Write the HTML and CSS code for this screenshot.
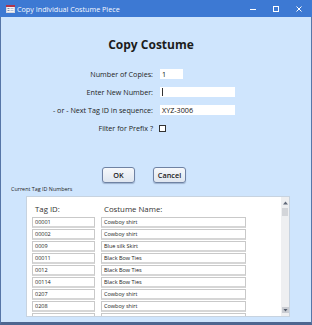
FILE: index.html
```html
<!DOCTYPE html>
<html>
<head>
<meta charset="utf-8">
<link rel="stylesheet" href="styles.css">
</head>
<body>
<div class="window">
  <div class="titlebar">
    <svg class="app-icon" width="9" height="8" viewBox="0 0 9 8">
      <rect x="0.5" y="0.5" width="8" height="7" fill="#f4f4f4" stroke="#d8d8e0"/>
      <rect x="0" y="0" width="9" height="2" fill="#b0344a"/>
      <rect x="1.5" y="3" width="2" height="1" fill="#7a8bb0"/>
      <rect x="1.5" y="5" width="2" height="1" fill="#7a8bb0"/>
      <rect x="4.5" y="3" width="3" height="1" fill="#b5bfd4"/>
      <rect x="4.5" y="5" width="3" height="1" fill="#b5bfd4"/>
    </svg>
    <span class="title">Copy Individual Costume Piece</span>
    <div class="controls">
      <svg class="ctl" width="10" height="10" viewBox="0 0 10 10"><line x1="2" y1="5.5" x2="8" y2="5.5" stroke="#fff" stroke-width="1"/></svg>
      <svg class="ctl" width="10" height="10" viewBox="0 0 10 10"><rect x="2.5" y="2.5" width="5" height="5" fill="none" stroke="#fff" stroke-width="1"/></svg>
      <svg class="ctl" width="10" height="10" viewBox="0 0 10 10"><path d="M2.5 2.5 L7.5 7.5 M7.5 2.5 L2.5 7.5" stroke="#fff" stroke-width="1"/></svg>
    </div>
  </div>
  <div class="body">
    <h1 class="heading">Copy Costume</h1>
    <div class="form">
      <span class="label">Number of Copies:</span>
      <div class="field short">1</div>
      <span class="label">Enter New Number:</span>
      <div class="field long"><span class="caret"></span></div>
      <span class="label">- or - Next Tag ID in sequence:</span>
      <div class="field long">XYZ-3006</div>
      <span class="label">Filter for Prefix ?</span>
      <div class="check-cell"><span class="checkbox"></span></div>
    </div>
    <div class="buttons">
      <button class="btn ok">OK</button>
      <button class="btn">Cancel</button>
    </div>
    <div class="sub-label">Current Tag ID Numbers</div>
    <div class="subform">
      <div class="list">
        <div class="list-head"><span class="col1">Tag ID:</span><span class="col2">Costume Name:</span></div>
        <div class="row"><div class="cell col1">00001</div><div class="cell col2">Cowboy shirt</div></div>
        <div class="row"><div class="cell col1">00002</div><div class="cell col2">Cowboy shirt</div></div>
        <div class="row"><div class="cell col1">0009</div><div class="cell col2">Blue silk Skirt</div></div>
        <div class="row"><div class="cell col1">00011</div><div class="cell col2">Black Bow Ties</div></div>
        <div class="row"><div class="cell col1">0012</div><div class="cell col2">Black Bow Ties</div></div>
        <div class="row"><div class="cell col1">00114</div><div class="cell col2">Black Bow Ties</div></div>
        <div class="row"><div class="cell col1">0207</div><div class="cell col2">Cowboy shirt</div></div>
        <div class="row"><div class="cell col1">0208</div><div class="cell col2">Cowboy shirt</div></div>
        <div class="row"><div class="cell col1">0209</div><div class="cell col2">Cowboy shirt</div></div>
      </div>
      <div class="scrollbar">
        <svg class="arrow" width="7" height="6" viewBox="0 0 7 6"><path d="M1 4.5 L3.5 1.5 L6 4.5 Z" fill="#606878"/></svg>
        <div class="thumb"></div>
        <div class="track"></div>
        <svg class="arrow down" width="7" height="6" viewBox="0 0 7 6"><rect x="0" y="0" width="7" height="6" fill="#c9ccd2"/><path d="M1.5 2 L5.5 2 L3.5 4.5 Z" fill="#505868"/></svg>
      </div>
    </div>
  </div>
</div>
</body>
</html>
```
FILE: styles.css
```css
* { box-sizing: border-box; }
html, body { margin: 0; padding: 0; }
body {
  width: 312px;
  height: 325px;
  overflow: hidden;
  font-family: "Open Sans", "Noto Sans", sans-serif;
  background: #cfe5fd;
}
.window {
  width: 312px;
  height: 325px;
  display: flex;
  flex-direction: column;
}
.titlebar {
  height: 17px;
  flex: none;
  background: #3d79d3;
  display: flex;
  align-items: center;
  padding-left: 6px;
  color: #fff;
}
.app-icon { flex: none; }
.title {
  margin-left: 2px;
  font-size: 7.2px;
  line-height: 10px;
  color: #f4f8ff;
}
.controls {
  margin-left: auto;
  display: flex;
  gap: 13px;
  padding-right: 8px;
}
.ctl { display: block; }
.body {
  flex: 1;
  background: #cfe5fd;
  border-left: 1px solid #5676a8;
  border-right: 1px solid #5676a8;
  border-bottom: 3px solid #4e6690;
  display: flex;
  flex-direction: column;
}
.heading {
  margin: 20px 10px 0 0;
  font-size: 12px;
  line-height: 16px;
  font-weight: 700;
  text-align: center;
  color: #1c1c1c;
}
.form {
  margin-top: 16px;
  display: grid;
  grid-template-columns: 152px auto;
  column-gap: 7px;
  row-gap: 8px;
  grid-auto-rows: 10px;
  font-size: 7.2px;
  line-height: 10px;
  color: #1e1e1e;
}
.label { text-align: right; white-space: nowrap; }
.field {
  background: #fff;
  height: 10px;
  padding-left: 2px;
  font-size: 7.2px;
  line-height: 10px;
  color: #111;
}
.field.short { width: 23px; }
.field.long { width: 75px; }
.caret {
  display: block;
  width: 1px;
  height: 8px;
  margin-top: 1px;
  background: #333;
}
.check-cell { display: flex; align-items: center; }
.checkbox {
  display: block;
  width: 7px;
  height: 7px;
  border: 1px solid #333;
  background: #fff;
  margin-left: -1px;
}
.buttons {
  margin-top: 34px;
  padding-left: 101px;
  display: flex;
  gap: 18px;
}
.btn {
  width: 33px;
  height: 16px;
  padding: 0;
  border: 1px solid #6f82a3;
  border-radius: 3px;
  background: linear-gradient(#f6f8fb, #dfe6f0);
  font-family: inherit;
  font-size: 7.3px;
  font-weight: 600;
  color: #1a1a1a;
  box-shadow: 0 1px 1px rgba(40, 60, 100, 0.3);
}
.sub-label {
  margin-top: 2px;
  padding-left: 10px;
  font-size: 5.4px;
  line-height: 8px;
  color: #222;
}
.subform {
  margin-top: 3px;
  margin-left: 25px;
  width: 264px;
  height: 121px;
  background: #fff;
  border: 1px solid #c7d3e0;
  display: flex;
  overflow: hidden;
}
.list {
  flex: 1;
  padding-left: 5px;
}
.list-head {
  display: flex;
  gap: 6px;
  height: 20px;
  padding-top: 6px;
  font-size: 7.8px;
  line-height: 12px;
  color: #333;
}
.list-head span { padding-left: 3px; }
.col1 { width: 63px; flex: none; }
.col2 { width: 145px; flex: none; }
.row {
  display: flex;
  gap: 6px;
  height: 11px;
  margin-bottom: 1px;
}
.cell {
  height: 11px;
  border: 1px solid #c9c9c9;
  border-bottom-width: 2px;
  border-bottom-color: #d6d6d6;
  padding-left: 2px;
  font-size: 5.5px;
  line-height: 8px;
  color: #222;
  background: #fff;
}
.scrollbar {
  width: 8px;
  flex: none;
  background: #eeeff1;
  display: flex;
  flex-direction: column;
  align-items: center;
  padding: 3px 0 3px;
}
.arrow { display: block; flex: none; }
.thumb {
  width: 6px;
  height: 8px;
  background: #d3d5d9;
  margin-top: 2px;
  flex: none;
}
.track { flex: 1; }
```
